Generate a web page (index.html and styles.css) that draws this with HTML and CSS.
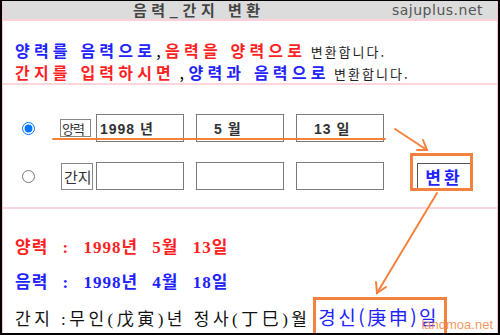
FILE: index.html
```html
<!DOCTYPE html>
<html lang="ko">
<head>
    <meta charset="UTF-8">
    <title>음력_간지 변환</title>
    <link rel="stylesheet" href="styles.css">
</head>
<body>

    <div class="frame">
        <div class="inner">
            <div class="header">
                <span class="title">음력_간지 변환</span>
                <span class="site">sajuplus.net</span>
            </div>

            <div class="intro">
                <p><b class="blue">양력를 음력으로</b>, <b class="red">음력을 양력으로</b> <span class="plain">변환합니다.</span></p>
                <p><b class="red">간지를 입력하시면</b> , <b class="blue">양력과 음력으로</b> <span class="plain">변환합니다.</span></p>
            </div>

            <form class="convert">
                <div class="row">
                    <input type="radio" name="mode" class="radio" checked>
                    <span class="tag tag-small">양력</span>
                    <input type="text" class="field first" value="1998 년">
                    <input type="text" class="field" value="5 월">
                    <input type="text" class="field" value="13 일">
                </div>
                <div class="row">
                    <input type="radio" name="mode" class="radio">
                    <span class="tag tag-tall">간지</span>
                    <input type="text" class="field">
                    <input type="text" class="field">
                    <input type="text" class="field">
                    <button type="button" class="convert-btn">변환</button>
                </div>
            </form>

            <div class="results">
                <p class="res red">양력 : 1998년 5월 13일</p>
                <p class="res blue">음력 : 1998년 4월 18일</p>
                <p class="res ganji">간지 :무인(戊寅)년 정사(丁巳)월 <span class="day">경신(庚申)일</span></p>
            </div>
        </div>

        <!-- orange annotations drawn over the page -->
        <svg class="marks" width="500" height="335" viewBox="0 0 500 335">
            <g stroke="#f5813f" fill="none" stroke-linecap="round">
                <line x1="53" y1="139" x2="385" y2="139" stroke-width="2"/>
                <line x1="395" y1="129" x2="427" y2="150" stroke-width="2"/>
                <polyline points="417,150 427,150 423,140" stroke-width="2"/>
                <rect x="411.5" y="154.5" width="60" height="35" stroke-width="3"/>
                <line x1="437" y1="193" x2="377" y2="293" stroke-width="2"/>
                <polyline points="376,282 377,293 386,287" stroke-width="2"/>
                <rect x="314.5" y="298.5" width="131" height="40" stroke-width="3"/>
            </g>
        </svg>
        <span class="watermark">landmoa.net</span>
    </div>

</body>
</html>
```

FILE: styles.css
```css
body { margin: 0; background: #fff; font-family: "Noto Sans CJK KR", "Noto Sans", sans-serif; }
p { margin: 0; }
.frame { position: relative; width: 500px; height: 335px; box-sizing: border-box; border: 2px solid #000; border-top-width: 1px; overflow: hidden; }
.inner { height: 100%; border-left: 1px solid #f6c4cc; border-right: 1px solid #f6c4cc; display: flex; flex-direction: column; }
.header, .intro, .convert { flex-shrink: 0; }
.header { height: 18px; background: #dcdcdc; border-bottom: 2px solid #fbd0d8; display: flex; align-items: center; }
.title { margin-left: 130px; font-size: 15px; font-weight: 700; color: #444; letter-spacing: 4.5px; line-height: 18px; }
.site { margin-left: auto; margin-right: 14px; font-family: "DejaVu Sans", sans-serif; font-size: 14px; color: #555; letter-spacing: 0.5px; line-height: 18px; }
.intro { height: 64px; box-sizing: border-box; padding: 19px 0 0 12px; border-bottom: 2px solid #fbd5dc; }
.intro p { line-height: 20px; font-size: 16px; }
.intro b { letter-spacing: 4.2px; }
.plain { font-size: 13px; color: #222; letter-spacing: 2px; }
.blue { color: #2222ff; }
.red { color: #ff1f1f; }
.convert { height: 124px; box-sizing: border-box; padding-top: 29px; border-bottom: 2px solid #fbd5dc; display: flex; flex-direction: column; gap: 20px; }
.row { display: flex; align-items: center; height: 28px; }
.radio { width: 13px; height: 13px; margin: 0 25px 0 19px; }
.tag { box-sizing: border-box; border: 1px solid #888; color: #333; overflow: hidden; white-space: nowrap; display: flex; align-items: center; }
.tag-small { width: 31px; height: 18px; padding-left: 1px; margin-right: 5px; font-size: 13px; letter-spacing: -1px; }
.tag-tall { width: 32px; height: 27px; padding-left: 2px; margin-left: 1px; margin-right: 3px; font-size: 15px; }
.field { box-sizing: border-box; width: 88px; height: 28px; margin: 0 12px 0 0; border: 1px solid #7a7a7a; padding: 0 0 0 17px; font-family: "Liberation Sans", "Noto Sans CJK KR", sans-serif; font-size: 14px; font-weight: 700; color: #333; letter-spacing: 1px; }
.field.first { padding-left: 3px; }
.convert-btn { box-sizing: border-box; width: 54px; height: 27px; margin-left: 21px; background: #fff; border: 1px solid #555; padding: 0; font-family: "Noto Sans CJK KR", sans-serif; font-size: 17px; font-weight: 700; color: #2222ff; letter-spacing: 3px; line-height: 25px; }
.results { min-height: 0; padding: 21px 0 0 12px; }
.res { font-family: "Liberation Serif", "Noto Sans CJK KR", serif; font-size: 17px; font-weight: 700; line-height: 35px; letter-spacing: 1px; word-spacing: 9px; }
.ganji { color: #111; font-weight: 400; letter-spacing: 3.5px; word-spacing: 0; margin-top: 2px; }
.day { font-family: "Noto Sans CJK KR", sans-serif; font-size: 19px; line-height: 20px; color: #2222ff; letter-spacing: 2.5px; }
.marks { position: absolute; left: -2px; top: -1px; pointer-events: none; }
.watermark { position: absolute; right: 5px; bottom: 1px; font-family: "Liberation Sans", sans-serif; font-size: 13px; color: rgba(245, 129, 63, 0.85); }
```
